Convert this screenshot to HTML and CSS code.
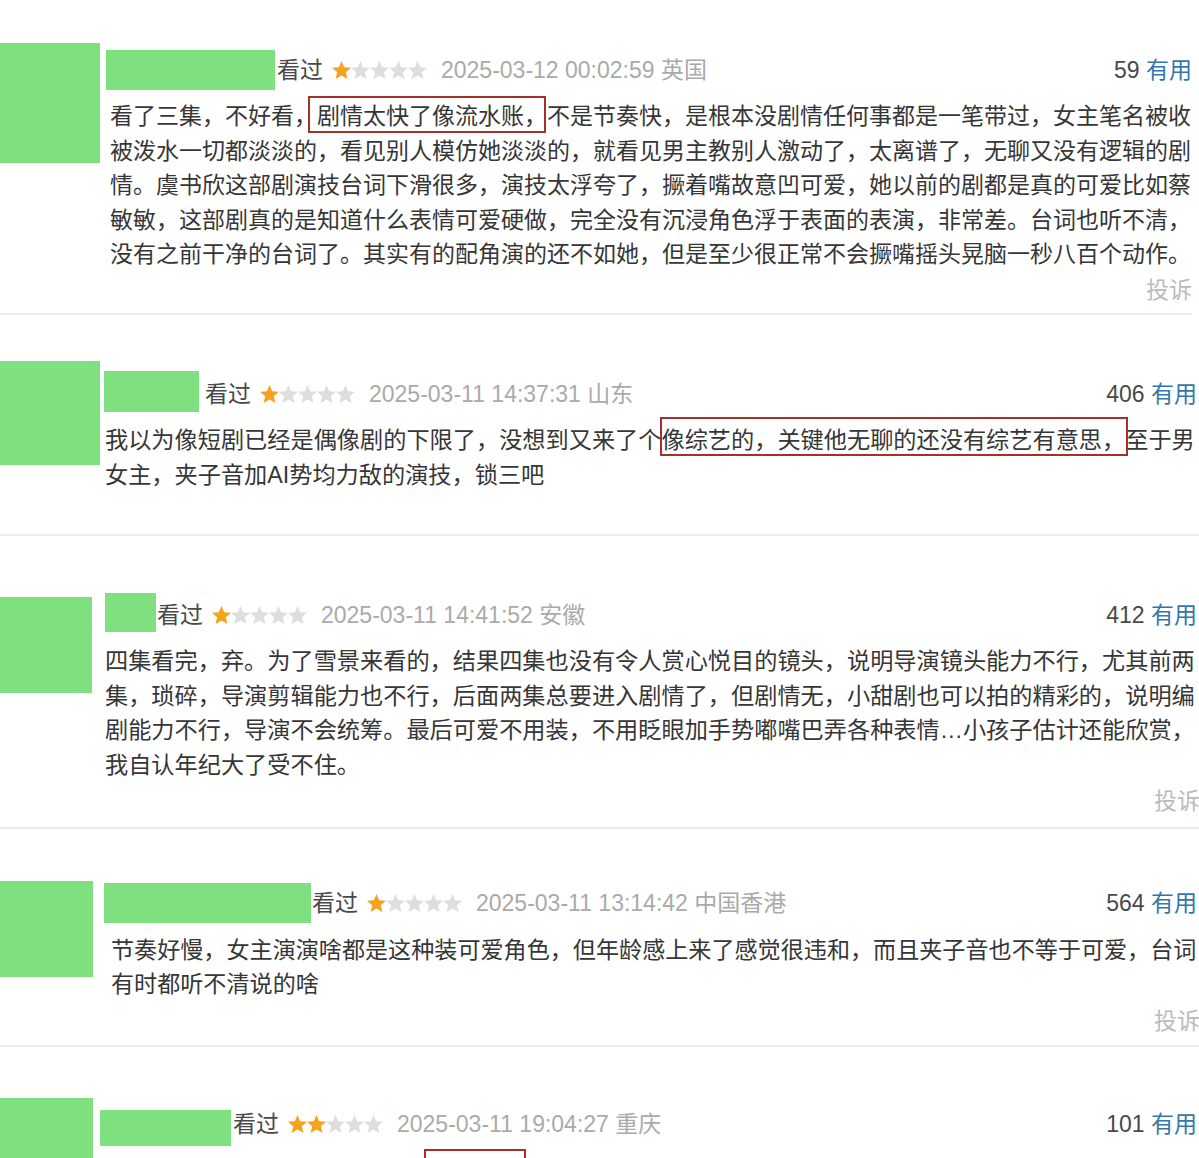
FILE: index.html
```html
<!DOCTYPE html>
<html lang="zh-CN">
<head>
    <meta charset="UTF-8">
    <meta name="viewport" content="width=device-width, initial-scale=1.0">
    <title>短评</title>
    <link rel="stylesheet" href="styles.css">
</head>
<body>
<svg class="sprite" aria-hidden="true">
    <defs>
        <polygon id="star" points="10,0 12.8,6.6 20,7.2 14.5,11.9 16.3,19 10,15.2 3.7,19 5.5,11.9 0,7.2 7.2,6.6"/>
    </defs>
</svg>

<div class="page">

    <!-- review 1 -->
    <div class="shot shot-1">
        <div class="avatar"></div>
        <div class="review">
            <div class="head">
                <span class="name"></span>
                <span class="watched">看过</span>
                <svg class="stars" viewBox="0 0 100 20"><use href="#star" class="on"/><use href="#star" x="20"/><use href="#star" x="40"/><use href="#star" x="60"/><use href="#star" x="80"/></svg>
                <span class="time">2025-03-12 00:02:59 英国</span>
                <span class="votes">59 <a class="useful" href="#">有用</a></span>
            </div>
            <p class="text">看了三集，不好看，<span class="mark">剧情太快了像流水账，</span>不是节奏快，是根本没剧情任何事都是一笔带过，女主笔名被收被泼水一切都淡淡的，看见别人模仿她淡淡的，就看见男主教别人激动了，太离谱了，无聊又没有逻辑的剧情。虞书欣这部剧演技台词下滑很多，演技太浮夸了，撅着嘴故意凹可爱，她以前的剧都是真的可爱比如蔡敏敏，这部剧真的是知道什么表情可爱硬做，完全没有沉浸角色浮于表面的表演，非常差。台词也听不清，没有之前干净的台词了。其实有的配角演的还不如她，但是至少很正常不会撅嘴摇头晃脑一秒八百个动作。</p>
            <div class="report">投诉</div>
        </div>
    </div>

    <!-- review 2 -->
    <div class="shot shot-2">
        <div class="avatar"></div>
        <div class="review">
            <div class="head">
                <span class="name"></span>
                <span class="watched">看过</span>
                <svg class="stars" viewBox="0 0 100 20"><use href="#star" class="on"/><use href="#star" x="20"/><use href="#star" x="40"/><use href="#star" x="60"/><use href="#star" x="80"/></svg>
                <span class="time">2025-03-11 14:37:31 山东</span>
                <span class="votes">406 <a class="useful" href="#">有用</a></span>
            </div>
            <p class="text">我以为像短剧已经是偶像剧的下限了，没想到又来了个<span class="mark">像综艺的，关键他无聊的还没有综艺有意思，</span>至于男女主，夹子音加AI势均力敌的演技，锁三吧</p>
        </div>
    </div>

    <!-- review 3 -->
    <div class="shot shot-3">
        <div class="avatar"></div>
        <div class="review">
            <div class="head">
                <span class="name"></span>
                <span class="watched">看过</span>
                <svg class="stars" viewBox="0 0 100 20"><use href="#star" class="on"/><use href="#star" x="20"/><use href="#star" x="40"/><use href="#star" x="60"/><use href="#star" x="80"/></svg>
                <span class="time">2025-03-11 14:41:52 安徽</span>
                <span class="votes">412 <a class="useful" href="#">有用</a></span>
            </div>
            <p class="text">四集看完，弃。为了雪景来看的，结果四集也没有令人赏心悦目的镜头，说明导演镜头能力不行，尤其前两集，琐碎，导演剪辑能力也不行，后面两集总要进入剧情了，但剧情无，小甜剧也可以拍的精彩的，说明编剧能力不行，导演不会统筹。最后可爱不用装，不用眨眼加手势嘟嘴巴弄各种表情…小孩子估计还能欣赏，我自认年纪大了受不住。</p>
            <div class="report">投诉</div>
        </div>
    </div>

    <!-- review 4 -->
    <div class="shot shot-4">
        <div class="avatar"></div>
        <div class="review">
            <div class="head">
                <span class="name"></span>
                <span class="watched">看过</span>
                <svg class="stars" viewBox="0 0 100 20"><use href="#star" class="on"/><use href="#star" x="20"/><use href="#star" x="40"/><use href="#star" x="60"/><use href="#star" x="80"/></svg>
                <span class="time">2025-03-11 13:14:42 中国香港</span>
                <span class="votes">564 <a class="useful" href="#">有用</a></span>
            </div>
            <p class="text">节奏好慢，女主演演啥都是这种装可爱角色，但年龄感上来了感觉很违和，而且夹子音也不等于可爱，台词有时都听不清说的啥</p>
            <div class="report">投诉</div>
        </div>
    </div>

    <!-- review 5 (cut off by the window) -->
    <div class="shot shot-5">
        <div class="avatar"></div>
        <div class="review">
            <div class="head">
                <span class="name"></span>
                <span class="watched">看过</span>
                <svg class="stars" viewBox="0 0 100 20"><use href="#star" class="on"/><use href="#star" x="20" class="on"/><use href="#star" x="40"/><use href="#star" x="60"/><use href="#star" x="80"/></svg>
                <span class="time">2025-03-11 19:04:27 重庆</span>
                <span class="votes">101 <a class="useful" href="#">有用</a></span>
            </div>
            <p class="text">看了两集实在看不下去了，剧情<span class="mark">悬浮尴尬</span>，男女主毫无化学反应，配角也演得很用力，台词像念稿子一样。</p>
        </div>
    </div>

</div>
</body>
</html>
```

FILE: styles.css
```css
/* --- General Setup --- */
:root {
    --green: #7ee07e;
    --text-color: #363636;
    --meta-color: #aaa;
    --link-color: #37a;
    --line-color: #ececec;
    --mark-color: #a3302b;
}

body {
    margin: 0;
    font-family: "Liberation Sans", "Noto Sans CJK SC", sans-serif;
    color: var(--text-color);
    background-color: #fff;
}

.sprite {
    position: absolute;
    width: 0;
    height: 0;
}

.page {
    height: 100vh;
    overflow: hidden;
}

/* --- One pasted review --- */
.shot {
    display: flex;
    align-items: flex-start;
    border-bottom: 2px solid var(--line-color);
}

.avatar {
    flex: none;
    background-color: var(--green);
}

.review {
    flex: 1;
    min-width: 0;
}

.head {
    display: flex;
    align-items: center;
    font-size: 23px;
    line-height: 1;
    white-space: nowrap;
}

.name {
    align-self: stretch;
    background-color: var(--green);
}

.watched {
    color: #494949;
}

.stars {
    width: 97px;
    height: 19px;
    margin-left: 8px;
}

.stars use {
    fill: #dedede;
}

.stars use.on {
    fill: #f5a31c;
}

.time {
    margin-left: 13px;
    color: var(--meta-color);
}

.votes {
    margin-left: auto;
    color: #494949;
}

.useful {
    color: var(--link-color);
    text-decoration: none;
}

.text {
    margin: 0;
    font-size: 23px;
    line-height: 34.5px;
}

.report {
    text-align: right;
    font-size: 23px;
    line-height: 34.5px;
    color: #bbb;
}

/* red box drawn over the quoted words */
.mark {
    position: relative;
}

.mark::after {
    content: "";
    position: absolute;
    top: -7px;
    bottom: -4px;
    left: -9px;
    right: 1px;
    border: 2px solid var(--mark-color);
}

/* --- Review 1 --- */
.shot-1 {
    padding: 43px 0 6px;
    margin-right: 7px;
}

.shot-1 .avatar { width: 100px; height: 120px; }
.shot-1 .review { margin: 7px 0 0 6px; }
.shot-1 .head { height: 40px; }
.shot-1 .name { width: 169px; }
.shot-1 .watched { margin-left: 2px; }
.shot-1 .text { margin: 9px 0 0 4px; }
.shot-1 .report { margin-top: 1px; }

/* --- Review 2 --- */
.shot-2 {
    padding: 46px 0 42px;
}

.shot-2 .avatar { width: 100px; height: 104px; }
.shot-2 .review { margin: 10px 2px 0 4px; }
.shot-2 .head { height: 41px; padding-top: 6px; box-sizing: border-box; }
.shot-2 .name { width: 95px; margin-top: -6px; }
.shot-2 .watched { margin-left: 6px; }
.shot-2 .text { margin: 11px 0 0 1px; font-size: 23.2px; }
.shot-2 .mark::after { top: -10px; bottom: -3px; left: -2px; right: -3px; }

/* --- Review 3 --- */
.shot-3 {
    padding: 57px 0 8px;
}

.shot-3 .avatar { width: 92px; height: 96px; margin-top: 4px; }
.shot-3 .review { margin: 0 2px 0 13px; }
.shot-3 .head { height: 39px; padding-top: 6px; box-sizing: border-box; }
.shot-3 .name { width: 51px; margin-top: -6px; }
.shot-3 .watched { margin-left: 1px; }
.shot-3 .text { margin-top: 12px; font-size: 23.2px; }
.shot-3 .report { margin: 2px -3px 0 0; }

/* --- Review 4 --- */
.shot-4 {
    padding: 52px 0 7px;
}

.shot-4 .avatar { width: 93px; height: 96px; }
.shot-4 .review { margin: 2px 2px 0 11px; }
.shot-4 .head { height: 40px; padding-top: 2px; box-sizing: border-box; }
.shot-4 .name { width: 207px; margin-top: -2px; }
.shot-4 .watched { margin-left: 1px; }
.shot-4 .text { margin: 10px 0 0 7px; font-size: 23.1px; }
.shot-4 .report { margin: 2px -3px 0 0; }

/* --- Review 5 --- */
.shot-5 {
    padding-top: 51px;
    border-bottom: none;
}

.shot-5 .avatar { width: 93px; height: 110px; }
.shot-5 .review { margin: 12px 2px 0 7px; }
.shot-5 .head { height: 36px; padding-bottom: 8px; box-sizing: border-box; }
.shot-5 .name { width: 131px; margin-bottom: -8px; }
.shot-5 .watched { margin-left: 2px; }
.shot-5 .text { margin: 8px 0 0 6px; }
.shot-5 .mark::after { top: -9px; left: -4px; right: -6px; }
```
